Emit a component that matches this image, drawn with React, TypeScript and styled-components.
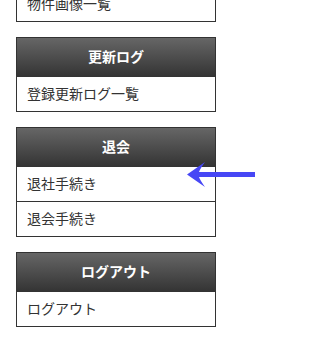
import React from 'react'
import styled, { createGlobalStyle } from 'styled-components'

const GlobalStyle = createGlobalStyle`
  html, body {
    margin: 0;
    padding: 0;
    background: #fff;
  }
  body {
    font-family: "Noto Sans CJK JP", "Noto Sans", sans-serif;
    color: #333;
    overflow: hidden;
  }
`

type Section = { title?: string; items: string[] }

const sections: Section[] = [
  { items: ['物件画像一覧'] },
  { title: '更新ログ', items: ['登録更新ログ一覧'] },
  { title: '退会', items: ['退社手続き', '退会手続き'] },
  { title: 'ログアウト', items: ['ログアウト'] },
]

const Page = styled.div`
  position: relative;
  width: 309px;
  height: 342px;
  padding: 0 16px;
  box-sizing: border-box;
`

const Menu = styled.div<{ $cut?: boolean }>`
  width: 200px;
  box-sizing: border-box;
  border: 1px solid #333;
  border-top-width: ${(p) => (p.$cut ? 0 : 1)}px;
  margin-top: ${(p) => (p.$cut ? '-13px' : 0)};
  margin-bottom: 15px;
  background: #fff;
`

const Header = styled.div`
  height: 39px;
  display: flex;
  align-items: center;
  justify-content: center;
  background: linear-gradient(to bottom, #666 0%, #333 100%);
  color: #fff;
  font-size: 14px;
  font-weight: bold;
  line-height: 1;
  padding-bottom: 3px;
  box-sizing: border-box;
`

const Item = styled.div`
  height: 34px;
  display: flex;
  align-items: center;
  padding: 0 10px 2px;
  font-size: 14px;
  line-height: 1;
  color: #333;
  box-sizing: border-box;
  & + & {
    border-top: 1px solid #333;
    height: 35px;
  }
`

const Arrow = styled.svg`
  position: absolute;
  left: 184px;
  top: 172px;
  width: 74px;
  height: 32px;
`

function App() {
  return (
    <Page>
      <GlobalStyle />
      {sections.map((s, i) => (
        <Menu key={i} $cut={!s.title}>
          {s.title && <Header>{s.title}</Header>}
          {s.items.map((item) => (
            <Item key={item}>{item}</Item>
          ))}
        </Menu>
      ))}
      <Arrow viewBox="0 0 74 32">
        <rect x="12" y="13" width="59" height="5" fill="#4747f5" />
        <path d="M3 15.5 L21 3 Q16 10 15 13 L15 18 Q16 21 21 28 Z" fill="#4747f5" />
      </Arrow>
    </Page>
  )
}

export default App
